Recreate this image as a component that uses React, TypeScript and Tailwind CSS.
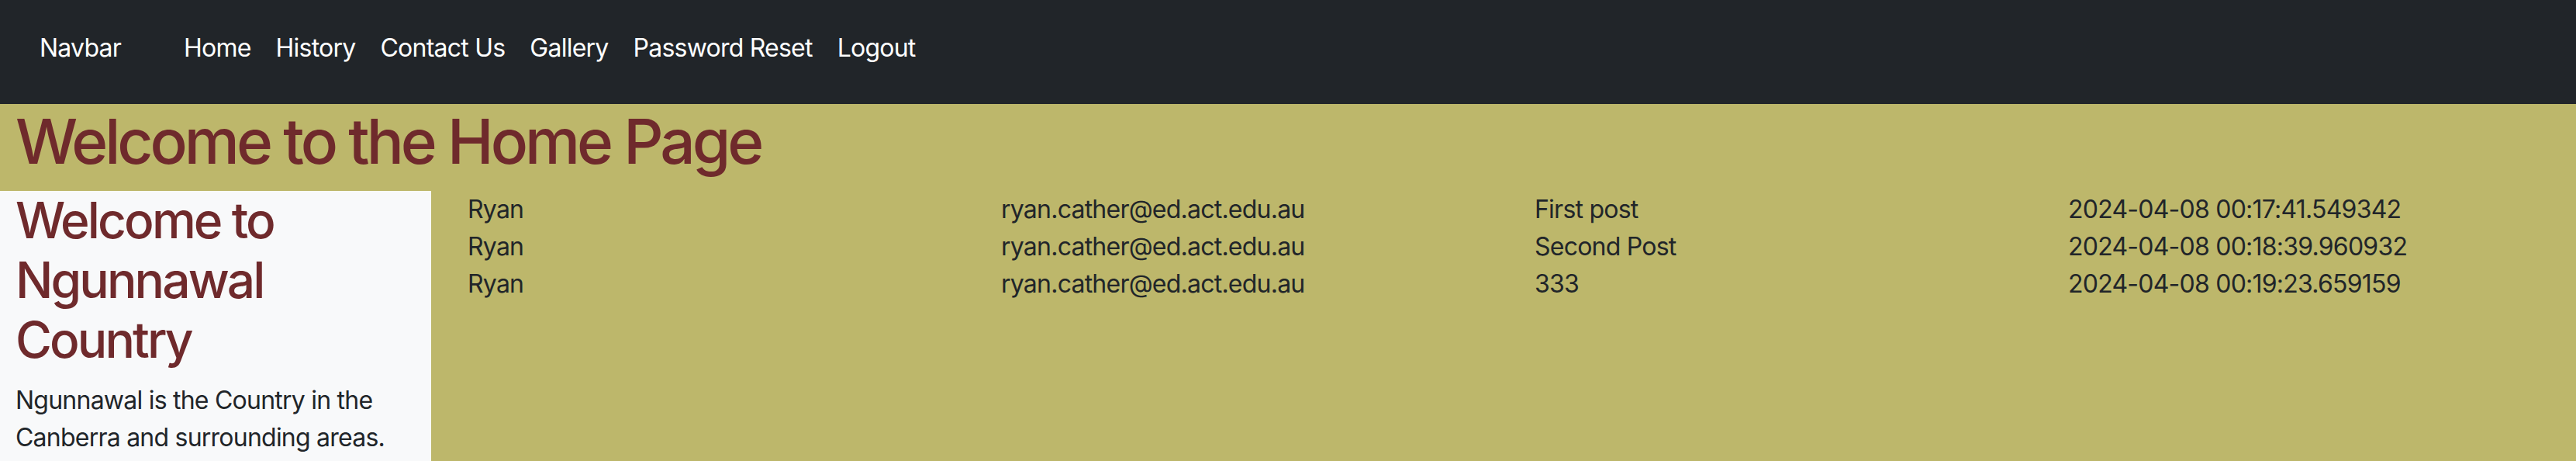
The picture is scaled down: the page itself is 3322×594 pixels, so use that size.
const NAV_LINKS = ['Home', 'History', 'Contact Us', 'Gallery', 'Password Reset', 'Logout'];

const POSTS = [
  { name: 'Ryan', email: 'ryan.cather@ed.act.edu.au', title: 'First post', date: '2024-04-08 00:17:41.549342' },
  { name: 'Ryan', email: 'ryan.cather@ed.act.edu.au', title: 'Second Post', date: '2024-04-08 00:18:39.960932' },
  { name: 'Ryan', email: 'ryan.cather@ed.act.edu.au', title: '333', date: '2024-04-08 00:19:23.659159' },
];

export default function App() {
  return (
    <div className="h-[594px] overflow-hidden bg-[#bdb76b] font-['Inter','Noto_Sans',sans-serif] text-[32px] leading-[48px] tracking-[-0.024em] text-[#212529]">
      {/* navbar */}
      <nav className="flex h-[134px] items-start bg-[#212529] pt-[38px] pl-[51px]">
        <a className="w-[170px] shrink-0 text-white">Navbar</a>
        <ul className="flex">
          {NAV_LINKS.map((link) => (
            <li key={link}>
              <a className="block px-[16px] text-white">{link}</a>
            </li>
          ))}
        </ul>
      </nav>

      <h1 className="mb-[16px] pl-[20px] text-[80px] font-medium leading-[96px] tracking-[-0.05em] text-[#6f2a2c]">
        Welcome to the Home Page
      </h1>

      <div className="flex">
        {/* sidebar */}
        <aside className="w-[556px] shrink-0 bg-[#f8f9fa] px-[20px]">
          <h2 className="mb-[16px] text-[64px] font-medium leading-[76.8px] tracking-[-0.045em] text-[#6f2a2c]">
            Welcome to Ngunnawal Country
          </h2>
          <p className="mb-[16px]">Ngunnawal is the Country in the Canberra and surrounding areas.</p>
        </aside>

        {/* posts */}
        <div className="flex-1 pl-[47px]">
          {POSTS.map((post, i) => (
            <div key={i} className="grid grid-cols-[repeat(4,688px)]">
              <div>{post.name}</div>
              <div>{post.email}</div>
              <div>{post.title}</div>
              <div className="whitespace-nowrap">{post.date}</div>
            </div>
          ))}
        </div>
      </div>
    </div>
  );
}
